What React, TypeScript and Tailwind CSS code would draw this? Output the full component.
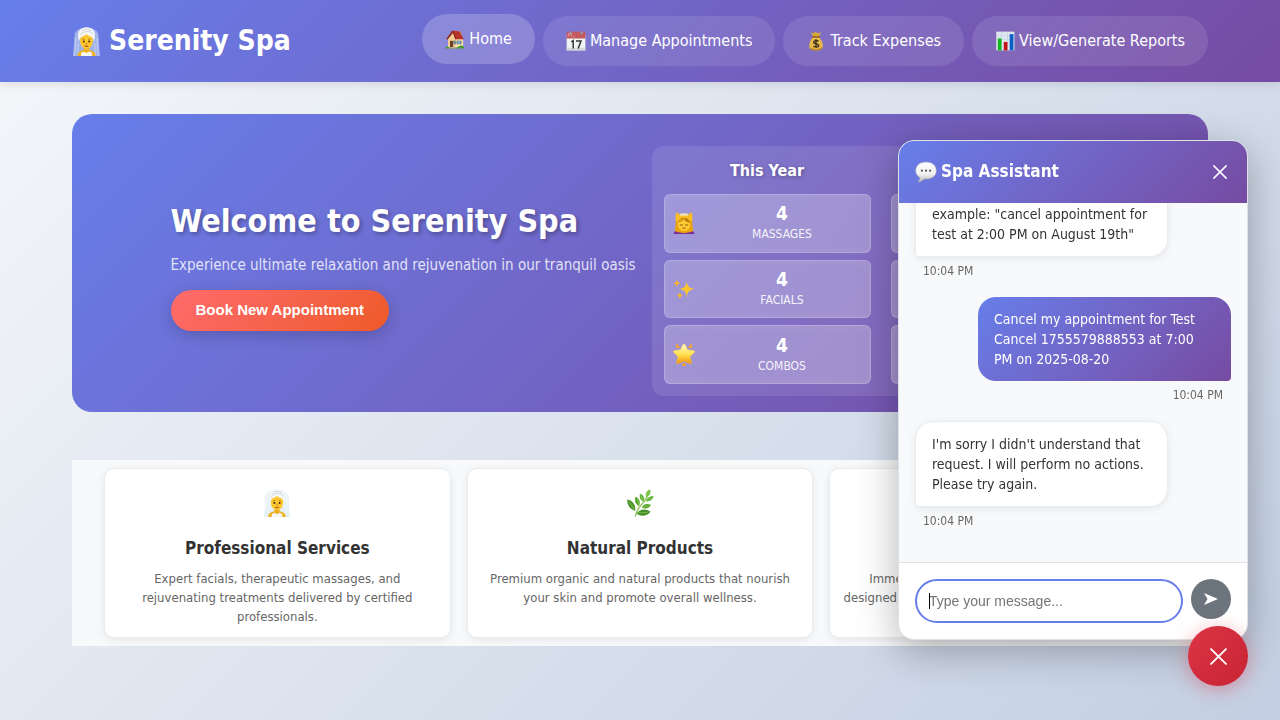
import type { ReactNode } from "react";

type IconProps = { className?: string };

function Svg({ className, children }: { className?: string; children: ReactNode }) {
  return (
    <svg viewBox="0 0 32 32" className={`shrink-0 ${className ?? ""}`} aria-hidden="true">
      {children}
    </svg>
  );
}

function VeilIcon({ className }: IconProps) {
  return (
    <Svg className={className}>
      <defs>
        <linearGradient id="veil" x1="0" y1="0" x2="0" y2="1">
          <stop offset="0" stopColor="#e3eef3" stopOpacity="0.5" />
          <stop offset="1" stopColor="#c5e0ee" stopOpacity="0.55" />
        </linearGradient>
      </defs>
      <path d="M16 1C9 1 4 3 3 8c-.8 4-.6 10-1 14-.3 4-.6 7-1 10h30c-.5-3-.7-6-1-10-.4-4-.2-10-1-14C28 3 23 1 16 1z" fill="url(#veil)" />
      <path d="M5 12c-2 7-1 13-2 20M27 12c2 7 1 13 2 20M7 18c-1 5 0 9-1 14M25 18c1 5 0 9 1 14" stroke="#fff" strokeOpacity=".4" fill="none" strokeWidth="1" />
      <path d="M6 32c0-4 3-5.500 7-6.500v-4h6v4c4 1 7 2.500 7 6.500z" fill="#eeb01f" />
      <path d="M10 32v-3.500l3-1.500c2 2 4 2 6 0l3 1.500V32z" fill="#f3f5f7" />
      <path d="M9 15c0-5 3-7.500 7-7.500s7 2.500 7 7.500c0 5.500-3 9-7 9s-7-3.500-7-9z" fill="#fdc72e" />
      <path d="M8 16C4 6 9 .3 16 .3S28 6 24 16c-.3-3-1-4-2.500-5-2-1-4-1.500-5.500-3-1.500 1.500-3.500 2-5.500 3-1.500 1-2.200 2-2.500 5z" fill="#f4f5f5" />
      <path d="M9 9c2-3 5-4 8-4s5 1 6 3M11 4c3-2 7-2 10 0" stroke="#c3ced4" fill="none" strokeWidth=".9" />
      <circle cx="13" cy="16" r="1.200" fill="#4a2d12" />
      <circle cx="19" cy="16" r="1.200" fill="#4a2d12" />
      <path d="M11.700 13.700l2.200-.5M18.100 13.200l2.200.5M15.200 18.300h1.600" stroke="#9b5b12" strokeWidth=".9" />
      <path d="M14 20.700q2 1.400 4 0" stroke="#b53c2c" strokeWidth="1.300" fill="none" />
    </Svg>
  );
}

function HouseIcon({ className }: IconProps) {
  return (
    <Svg className={className}>
      <path d="M21 4h5v10h-5z" fill="#c98b5f" />
      <path d="M5 15L13 6l14 5 2 17H5z" fill="#f6dfb0" />
      <path d="M5 15l8-9 4 10v13H5z" fill="#f2cc91" />
      <path d="M12 2.500L23 4l7 12-2 .8H17z" fill="#b8342b" />
      <path d="M12 2L2 16l2 1.200L12.500 6.500 17 17l2-1z" fill="#8c2420" />
      <path d="M17 17h12v12H17z" fill="#f8e4b8" />
      <path d="M8 19h5v10H8z" fill="#6e3f25" />
      <path d="M14 19h3v5h-3zM19 19h7v5h-7z" fill="#4da1d9" stroke="#7b6145" strokeWidth=".8" />
      <path d="M22.500 19v5" stroke="#fff" strokeWidth=".8" />
      <path d="M1 31c0-3 3-3.500 5-2h13c2-.3 3-2 5-2 3-1.500 7 0 7 4z" fill="#4a9a34" />
      <path d="M7 29h12v2H7z" fill="#c6b79a" />
    </Svg>
  );
}

function CalendarIcon({ className }: IconProps) {
  return (
    <Svg className={className}>
      <path d="M1 6h30v25H1z" fill="#f1f2f2" />
      <path d="M1 27h30v4H1z" fill="#d5d7d8" />
      <path d="M1 1h30v11H1z" fill="#c25a5e" />
      <path d="M4 9V4l2.500 3L9 4v5M11 9h3" stroke="#e8a4a4" fill="none" />
      <circle cx="7" cy="3" r="1.800" fill="#8f9fd4" />
      <circle cx="25" cy="3" r="1.800" fill="#8f9fd4" />
      <path d="M8.500 17.500l3-2V28M16 16h8l-4.500 12" fill="none" stroke="#35383b" strokeWidth="2.400" />
    </Svg>
  );
}

function MoneyBagIcon({ className }: IconProps) {
  return (
    <Svg className={className}>
      <path d="M11 9L8 2l4 1.500L15.500 1 19 3.500 24 2l-3 7z" fill="#d8a63c" />
      <path d="M11 9.500C7 14 5 19 5 24c0 5 4 7 11 7s11-2 11-7c0-5-2-10-6-14.500z" fill="#e6b84c" />
      <path d="M7 26c3 4 15 4 19-1 0 4-4 6-10 6s-9-1.500-9-5z" fill="#b98526" />
      <path d="M10 9.500h12" stroke="#8e5c1b" strokeWidth="2.400" />
      <path d="M19.800 16.500c-1.500-2-7.500-1.700-7.500 1.500 0 3.500 8 1.800 8 5.300 0 3.200-6.800 3.300-8.300.7M16 13.300v13.400" stroke="#3a2d18" strokeWidth="2.200" fill="none" />
    </Svg>
  );
}

function ChartIcon({ className }: IconProps) {
  return (
    <Svg className={className}>
      <path d="M2 1h29v30H2z" fill="#dfe8f1" />
      <path d="M2 8h29M2 14h29M2 20h29M2 26h29M10 1v30M20 1v30" stroke="#bccbdc" strokeWidth=".8" />
      <path d="M4.500 12h6v19h-6z" fill="#13b51f" />
      <path d="M14 17.500h6V31h-6z" fill="#c0141c" />
      <path d="M23.500 5h6v26h-6z" fill="#0a5fc4" />
    </Svg>
  );
}

function MassageIcon({ className }: IconProps) {
  return (
    <Svg className={className}>
      <path d="M1 32c0-4 3-5.500 7-6h16c4 .5 7 2 7 6z" fill="#7a2f96" />
      <path d="M4 14C4 6 9 3 16 3s12 3 12 11c0 6 1 9 2 13-4 3-8 3-10 3h-8c-2 0-6 0-10-3 1-4 2-7 2-13z" fill="#e5a313" />
      <path d="M5 0l4 3.500h14L27 0c1.500 5 1.500 9 1 13H4C3.500 9 3.500 5 5 0z" fill="#fbbd23" />
      <path d="M10 2.500q6-1.500 12 0v3H10z" fill="#f4e3b8" />
      <path d="M12 25h8v4c-2 2-6 2-8 0z" fill="#eda810" />
      <ellipse cx="16" cy="18" rx="9" ry="9.500" fill="#ffcb30" />
      <path d="M8 15c1-5 5-7 9-6.500 4 .3 7 3 7.500 7.500-3-.8-6-2.500-8.500-5-2 2.500-5 3-8 4z" fill="#b97a0b" />
      <path d="M10 12c4-.5 6-2 8-3" stroke="#f7c02b" strokeWidth="1.400" fill="none" />
      <path d="M10 18.500q2.200 1.500 4.400 0M17.600 18.500q2.200 1.500 4.400 0" stroke="#6b3d0d" fill="none" strokeWidth="1.200" />
      <path d="M13.500 23q2.500 1.600 5 0" stroke="#9a401c" fill="none" strokeWidth="1.300" />
    </Svg>
  );
}

function SparklesIcon({ className }: IconProps) {
  return (
    <Svg className={className}>
      <path d="M20 4c.8 8 3 10.500 11.500 12C23 17.500 20.800 20 20 29c-.8-9-3-11.500-11-13 8-1.500 10.200-4 11-12z" fill="#fcc633" />
      <path d="M5.500 1.500c.5 4 1.600 5.200 5.300 6-3.700.8-4.800 2-5.300 6-.5-4-1.500-5.200-5-6 3.500-.8 4.500-2 5-6zM10 20c.5 3.500 1.400 4.700 4.700 5.500-3.300.8-4.200 2-4.700 5.500-.5-3.500-1.400-4.700-4.700-5.500 3.300-.8 4.200-2 4.700-5.500z" fill="#f9b62b" />
    </Svg>
  );
}

function GlowStarIcon({ className }: IconProps) {
  return (
    <Svg className={className}>
      <defs>
        <linearGradient id="star" x1="0" y1="0" x2="0" y2="1">
          <stop offset="0" stopColor="#fffbd0" />
          <stop offset=".55" stopColor="#ffe04a" />
          <stop offset="1" stopColor="#f08c12" />
        </linearGradient>
      </defs>
      <path d="M16 0q1.500 0 2.200 1.500l3 7 8.800 1q2.500.6.900 2.800l-6 6 2.100 8.700q.2 2.500-2.300 1.600L16 25l-8.700 3.600q-2.500.9-2.300-1.600l2.100-8.700-6-6q-1.600-2.200.9-2.800l8.800-1 3-7Q14.500 0 16 0z" fill="url(#star)" stroke="#f8c23a" strokeWidth=".6" />
      <path d="M5.500 1l3.500 4-4-.8zM26.500 1l-3.500 4 4-.8zM16 28l2 2.500-2 1.500-2-1.500z" fill="#f3a321" stroke="#f3a321" strokeLinejoin="round" strokeWidth="1.700" />
    </Svg>
  );
}

function SpeechIcon({ className }: IconProps) {
  return (
    <Svg className={className}>
      <defs>
        <linearGradient id="speech" x1="0" y1="0" x2="0" y2="1">
          <stop offset="0" stopColor="#fff" />
          <stop offset=".6" stopColor="#f1f1f1" />
          <stop offset="1" stopColor="#b9b9bd" />
        </linearGradient>
      </defs>
      <path d="M16 1.500C7.500 1.500 1 6.500 1 14c0 4.500 2.500 8 6 10 .3 2.500-1 4.500-3 6.500 4 0 7-1.500 9.500-4.300C24 27 31 22 31 14c0-7.500-6.500-12.500-15-12.500z" fill="url(#speech)" stroke="#a6a6ae" strokeWidth=".8" />
      <circle cx="10" cy="14" r="1.500" fill="#4c4c50" />
      <circle cx="16" cy="14" r="1.500" fill="#4c4c50" />
      <circle cx="22" cy="14" r="1.500" fill="#4c4c50" />
    </Svg>
  );
}

function HerbIcon({ className }: IconProps) {
  return (
    <Svg className={className}>
      <path d="M10.500 31.500c1-8 6-12 10-17 2-3 3-5 5-8" stroke="#8fbf52" strokeWidth="1.400" fill="none" />
      <path d="M10.500 25C5 23 1 19 1.500 12c6 1 10 6 9 13z" fill="#4b962c" />
      <path d="M15 19.500c-4-2-6-6-4-11 4 2 6 6 4 11z" fill="#59a832" />
      <path d="M20 14.500c-4-2-5-5-4-9.500 4 2 6 5 4 9.500z" fill="#66b53a" />
      <path d="M23 9c-1-4 0-7 4.500-8.500C29 4 27 8 23 9z" fill="#75c243" />
      <path d="M22 14c2-4 5-6 9.500-6C31 12 27 15 22 14z" fill="#69b83c" />
      <path d="M18 21c2-4 6-5 10.500-3C27 22 22 23.500 18 21z" fill="#58a631" />
      <path d="M12 28c4-5 10-6 16-2-4 5-11 6-16 2z" fill="#459028" />
      <path d="M4 15l6 9M13 11l2 8M17.500 8l2 5M26 3l-3 5M29 10l-6 3.500M26 19l-7 2M25 26.500l-12 1" stroke="#9ad062" strokeWidth=".7" fill="none" />
    </Svg>
  );
}

function CrossIcon({ className }: IconProps) {
  return (
    <svg viewBox="0 0 16 16" className={className} aria-hidden="true">
      <path d="M1 1l14 14M15 1L1 15" stroke="currentColor" strokeWidth="1.700" strokeLinecap="round" />
    </svg>
  );
}

const links = [
  { label: "Home", Icon: HouseIcon, active: true },
  { label: "Manage Appointments", Icon: CalendarIcon, active: false },
  { label: "Track Expenses", Icon: MoneyBagIcon, active: false },
  { label: "View/Generate Reports", Icon: ChartIcon, active: false },
];

const stats = [
  { label: "Massages", count: 4, Icon: MassageIcon },
  { label: "Facials", count: 4, Icon: SparklesIcon },
  { label: "Combos", count: 4, Icon: GlowStarIcon },
];

const features = [
  {
    title: "Professional Services",
    text: "Expert facials, therapeutic massages, and rejuvenating treatments delivered by certified professionals.",
    Icon: VeilIcon,
  },
  {
    title: "Natural Products",
    text: "Premium organic and natural products that nourish your skin and promote overall wellness.",
    Icon: HerbIcon,
  },
  {
    title: "Peaceful Ambiance",
    text: "Immerse yourself in our tranquil environment\ndesigned for your ultimate relaxation and stress relief.",
    Icon: SparklesIcon,
  },
];

const messages = [
  {
    from: "bot",
    text: 'To cancel an appointment please provide the name, time and date. For\nexample: "cancel appointment for test at 2:00 PM on August 19th"',
    time: "10:04 PM",
  },
  { from: "user", text: "Cancel my appointment for Test Cancel 1755579888553 at 7:00 PM on 2025-08-20", time: "10:04 PM" },
  { from: "bot", text: "I'm sorry I didn't understand that request. I will perform no actions. Please try again.", time: "10:04 PM" },
];

function Header() {
  return (
    <header className="bg-linear-135 from-[#667eea] to-[#764ba2] shadow-[0_2px_10px_rgba(0,0,0,0.1)]">
      <div className="mx-auto flex max-w-[1200px] items-center justify-between px-8 py-4 text-white">
        <div className="flex items-center gap-2 text-[28px] leading-[50px] font-bold">
          <VeilIcon className="size-[29px]" />
          Serenity Spa
        </div>
        <nav className="flex gap-2">
          {links.map(({ label, Icon, active }) => (
            <a
              key={label}
              href="#"
              className={`flex items-center gap-1 rounded-full px-[23px] py-3 text-base leading-[26px] whitespace-nowrap ${
                active ? "-translate-y-0.5 bg-white/20" : "bg-white/10"
              }`}
            >
              <Icon className="size-5" />
              {label}
            </a>
          ))}
        </nav>
      </div>
    </header>
  );
}

function YearStats({ title }: { title: string }) {
  return (
    <div className="flex-1">
      <h3 className="mb-2.5 text-center text-base leading-[26px] font-bold [text-shadow:1px_1px_4px_rgba(0,0,0,0.3)]">{title}</h3>
      <div className="grid h-[190px] grid-rows-3 gap-[7px]">
        {stats.map(({ label, count, Icon }) => (
          <div
            key={label}
            className="flex items-center gap-2 rounded-md border border-white/20 bg-white/25 px-2 shadow-[inset_0_0_10px_rgba(255,255,255,0.08)]"
          >
            <Icon className="size-[22px]" />
            <div className="flex-1 text-center">
              <div className="text-[19px] leading-[22px] font-bold">{count}</div>
              <div className="text-xs leading-5 uppercase opacity-90">{label}</div>
            </div>
          </div>
        ))}
      </div>
    </div>
  );
}

function Hero() {
  return (
    <section className="flex items-center justify-center gap-6 rounded-[20px] bg-linear-135 from-[#667eea] to-[#764ba2] px-8 pt-8 pb-4 text-white">
      <div className="w-[457px] pb-4">
        <h1 className="mb-1.5 text-[32px] leading-[50px] font-bold whitespace-nowrap [text-shadow:2px_2px_4px_rgba(0,0,0,0.3)]">
          Welcome to Serenity Spa
        </h1>
        <p className="mb-3 text-[15px] leading-[26px] whitespace-nowrap opacity-80">
          Experience ultimate relaxation and rejuvenation in our tranquil oasis
        </p>
        <button
          type="button"
          className="h-[41px] rounded-full bg-linear-135 from-[#ff6b6b] to-[#ee5a24] px-[25px] font-['Liberation_Sans',Arial,sans-serif] text-[15px] font-bold shadow-[0_4px_15px_rgba(0,0,0,0.2)]"
        >
          Book New Appointment
        </button>
      </div>
      <div className="flex w-[458px] gap-5 rounded-xl bg-white/10 p-3">
        <YearStats title="This Year" />
        <YearStats title="All Time" />
      </div>
    </section>
  );
}

function Features() {
  return (
    <section className="mt-12 grid grid-cols-3 gap-4 bg-[#f8f9fa] px-8 py-2">
      {features.map(({ title, text, Icon }) => (
        <article
          key={title}
          className="flex flex-col items-center rounded-[10px] border border-[#e9ecef] bg-white px-3 pt-5 pb-[11px] text-center shadow-[0_2px_8px_rgba(0,0,0,0.08)]"
        >
          <Icon className="size-7" />
          <h3 className="mt-[17px] mb-[7px] text-[17px] leading-7 font-bold text-[#333]">{title}</h3>
          <p className="text-[13px] leading-[19px] whitespace-pre-line text-[#666]">{text}</p>
        </article>
      ))}
    </section>
  );
}

function Chat() {
  return (
    <>
      <aside
        aria-label="Spa Assistant"
        className="fixed right-8 bottom-20 flex h-[500px] w-[350px] flex-col overflow-hidden rounded-2xl border border-[#dee2e6] bg-white shadow-[0_10px_40px_rgba(0,0,0,0.3)]"
      >
        <header className="flex h-[62px] shrink-0 items-center justify-between bg-linear-135 from-[#667eea] to-[#764ba2] px-4 text-white">
          <h2 className="flex items-center gap-1 text-[17px] font-bold">
            <SpeechIcon className="size-[22px]" />
            Spa Assistant
          </h2>
          <button type="button" aria-label="Close" className="mr-1">
            <CrossIcon className="size-3.5" />
          </button>
        </header>
        <div className="flex flex-1 flex-col justify-end gap-4 overflow-hidden bg-[#f8f9fa] px-4 pb-[31px]">
          {messages.map(({ from, text, time }, i) => (
            <div key={i} className={`flex shrink-0 flex-col gap-1 ${from === "user" ? "items-end" : "items-start"}`}>
              <p
                className={`w-[253px] rounded-[18px] py-3 pl-4 text-sm leading-5 whitespace-pre-line ${
                  from === "user"
                    ? "rounded-br-sm bg-linear-135 from-[#667eea] to-[#764ba2] pr-5 text-white"
                    : "rounded-bl-sm border border-[#e9ecef] bg-white pr-2 text-[#333] shadow-[0_2px_8px_rgba(0,0,0,0.08)]"
                }`}
              >
                {text}
              </p>
              <time className="px-2 text-xs leading-5 text-[#666]">{time}</time>
            </div>
          ))}
        </div>
        <form className="flex gap-2 border-t border-[#dee2e6] p-4" onSubmit={(e) => e.preventDefault()}>
          <div className="relative min-w-0 flex-1">
            <input
              type="text"
              aria-label="Message"
              placeholder="Type your message..."
              className="h-11 w-full rounded-full border-2 border-[#667eea] bg-white px-3 font-['Liberation_Sans',Arial,sans-serif] text-sm text-[#333] outline-none placeholder:text-[#757575]"
            />
            <span className="absolute top-3.5 left-3.5 h-4 w-px bg-black" />
          </div>
          <button type="submit" aria-label="Send" className="flex size-10 items-center justify-center rounded-full bg-[#6c757d] text-white">
            <svg viewBox="0 0 14 12" className="h-3 w-3.5" aria-hidden="true">
              <path d="M0 0l14 6-14 6 3.500-6z" fill="currentColor" />
            </svg>
          </button>
        </form>
      </aside>
      <button
        type="button"
        aria-label="Toggle chat"
        className="fixed right-8 bottom-[34px] flex size-[60px] items-center justify-center rounded-full bg-linear-135 from-[#dc3545] to-[#c82333] text-white shadow-[0_4px_20px_rgba(220,53,69,0.4)]"
      >
        <CrossIcon className="size-[17px]" />
      </button>
    </>
  );
}

export default function App() {
  return (
    <div className="min-h-screen bg-linear-135 from-[#f5f7fa] to-[#c3cfe2] font-['DejaVu_Sans_Condensed','Noto_Sans',sans-serif]">
      <Header />
      <main className="mx-auto max-w-[1200px] p-8">
        <Hero />
        <Features />
      </main>
      <Chat />
    </div>
  );
}
